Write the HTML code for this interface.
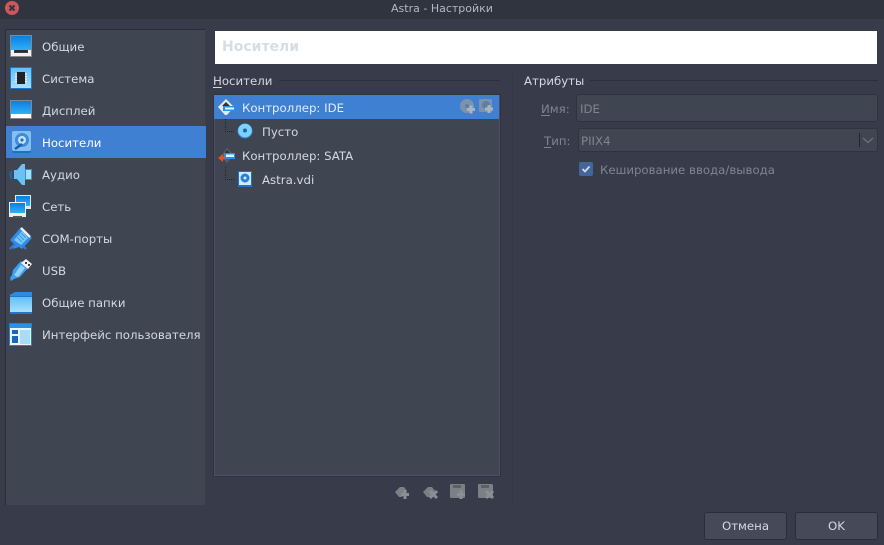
<!DOCTYPE html>
<html>
<head>
<meta charset="utf-8">
<style>
html,body{margin:0;padding:0}
body{width:884px;height:545px;position:relative;overflow:hidden;background:#383c4a;font-family:"DejaVu Sans","Liberation Sans",sans-serif;font-size:11.75px;color:#d3dae3}
.a{position:absolute}
.t{position:absolute;white-space:nowrap;line-height:16px}
svg{position:absolute;overflow:visible}
u{text-decoration-thickness:1px;text-underline-offset:2px}
</style>
</head>
<body>
<svg width="0" height="0" style="left:0;top:0"><defs>
<linearGradient id="sc" x1="0" y1="0" x2="0" y2="1"><stop offset="0" stop-color="#0a7fe0"/><stop offset="1" stop-color="#2fb0fa"/></linearGradient>
<linearGradient id="lb" x1="0" y1="0" x2="0" y2="1"><stop offset="0" stop-color="#5fc0f8"/><stop offset="1" stop-color="#a8e0fc"/></linearGradient>
</defs></svg>
<div class="a" style="left:0;top:0;width:884px;height:19px;background:#2f343f"></div>
<div class="t" style="left:0;width:884px;top:1px;text-align:center;color:#afb8c6;font-size:11px">Astra - Настройки</div>
<svg style="left:5px;top:1px" width="14" height="14"><circle cx="7" cy="7" r="7" fill="#cc575d"/><path d="M4.500 4.500l5 5M9.500 4.500l-5 5" stroke="#2f343f" stroke-width="2"/></svg>

<!-- sidebar -->
<div class="a" style="left:5px;top:29px;width:201px;height:476px;background:#404552;border-left:1px solid #2b2e39;border-top:1px solid #2b2e39;border-right:1px solid #3a3f4c;box-sizing:border-box"></div>
<div class="a" style="left:6px;top:126px;width:200px;height:32px;background:#3f80d2"></div>
<div class="t" style="left:42px;top:39px">Общие</div>
<div class="t" style="left:42px;top:71px">Система</div>
<div class="t" style="left:42px;top:103px">Дисплей</div>
<div class="t" style="left:42px;top:135px;color:#fff">Носители</div>
<div class="t" style="left:42px;top:167px">Аудио</div>
<div class="t" style="left:42px;top:199px">Сеть</div>
<div class="t" style="left:42px;top:231px">COM-порты</div>
<div class="t" style="left:42px;top:263px">USB</div>
<div class="t" style="left:42px;top:295px">Общие папки</div>
<div class="t" style="left:42px;top:327px">Интерфейс пользователя</div>

<!-- sidebar icons -->
<svg style="left:10px;top:35px" width="22" height="22"><rect width="22" height="22" fill="#85888e"/><rect x="1" y="1" width="20" height="14" fill="url(#sc)"/><rect x="1" y="15" width="20" height="6" fill="#f2f2f2"/><rect x="4" y="15" width="14" height="3" fill="#3a3d44"/><rect x="5" y="15" width="12" height="2" fill="#2a2d33"/></svg>
<svg style="left:10px;top:67px" width="22" height="22"><rect width="22" height="22" fill="#1a78d4"/><rect x="1" y="1" width="20" height="20" fill="url(#lb)"/><rect x="7" y="5" width="8" height="12" fill="#222"/><path d="M5 7h2M5 9.500h2M5 12h2M5 14.500h2M15 7h2M15 9.500h2M15 12h2M15 14.500h2" stroke="#eef" stroke-width="1.200"/></svg>
<svg style="left:10px;top:100px" width="22" height="20"><rect width="22" height="19" fill="#85888e"/><rect x="1" y="1" width="20" height="13" fill="url(#sc)"/><rect x="1" y="14" width="20" height="4" fill="#fff"/></svg>
<svg style="left:11px;top:131px" width="21" height="23"><rect x="1" y="1" width="19" height="21" rx="2" fill="#1f6fc4"/><rect x="1" y="0" width="19" height="20" rx="2" fill="#83c0f0"/><circle cx="11" cy="9" r="7" fill="#3f8bdc"/><circle cx="11" cy="9" r="4" fill="#c6e4f8"/><circle cx="11" cy="9" r="1.600" fill="#2a6db8"/><path d="M4 18l7-5" stroke="#1a5da8" stroke-width="2.500"/></svg>
<svg style="left:9px;top:163px" width="24" height="23"><path d="M5 7h3l5-6h3v21h-3l-5-6H5z" fill="#6cc0f5"/><rect x="16" y="6" width="7" height="11" fill="#2a8fe6"/><rect x="17" y="7" width="5" height="9" fill="#a9def9"/><path d="M3 8q-3 3.500 0 8" stroke="#1a66b8" stroke-width="2" fill="none"/></svg>
<svg style="left:9px;top:195px" width="23" height="23"><rect x="6" y="0" width="16" height="14" fill="#e8e8e8"/><rect x="7" y="1" width="14" height="10" fill="url(#sc)"/><rect x="0" y="7" width="17" height="15" fill="#eee"/><rect x="1" y="8" width="15" height="10" fill="url(#sc)"/><rect x="4" y="21" width="9" height="2" fill="#555"/></svg>
<svg style="left:9px;top:226px" width="24" height="24"><path d="M1 14L12 1l11 11-10 11-3-2-6 2 1-5z" fill="#2f8ce8"/><path d="M5 14l8-9 6 7-7 7z" fill="#7cc6f8"/><path d="M8 11l5 5M10 9l5 5M12 7l5 5" stroke="#3a9aea" stroke-width="1"/><path d="M12 2l9 9" stroke="#f0f0f0" stroke-width="2.500"/><path d="M1 23l5-5M17 23l-3-3" stroke="#2a7fd6" stroke-width="2"/></svg>
<svg style="left:9px;top:258px" width="24" height="24"><path d="M2 23l3-2 6-2 8-9-7-7-8 9-1 5-2 3z" fill="#3f9ff0"/><path d="M5 17L12 7l4 3-7 9z" fill="#8fd2fb"/><path d="M12 5l5-4 6 5-4 5z" fill="#f2f2f2"/><rect x="16" y="4" width="2" height="2" fill="#444"/><rect x="19" y="6" width="2" height="2" fill="#444"/></svg>
<svg style="left:9px;top:290px" width="24" height="24"><path d="M1 4h22v20H1z" fill="#1f78cf"/><path d="M1 5l5-3h17v4H1z" fill="#2f8ae0"/><rect x="1" y="7" width="22" height="15" fill="url(#lb)"/></svg>
<svg style="left:9px;top:323px" width="23" height="23"><rect width="23" height="23" fill="#1a82dc"/><rect x="1" y="1" width="21" height="21" fill="#eaf6fd"/><rect x="1" y="1" width="21" height="4" fill="#2a92e4"/><rect x="3" y="7" width="6" height="13" fill="#1968ba"/><rect x="3" y="11" width="6" height="2" fill="#eaf6fd"/><rect x="11" y="7" width="10" height="14" fill="#a8dcf8"/></svg>

<!-- header -->
<div class="a" style="left:215px;top:31px;width:662px;height:33px;background:#fff"></div>
<div class="t" style="left:222px;top:39px;font-size:14px;font-weight:bold;color:#d7dde5">Носители</div>

<!-- storage group -->
<div class="t" style="left:213px;top:73px"><u>Н</u>осители</div>
<div class="a" style="left:279px;top:80px;width:221px;height:1px;background:#2c303b"></div>
<div class="a" style="left:214px;top:95px;width:286px;height:381px;background:#404552;outline:1px solid #2f3340;box-shadow:0 0 0 1px #4a4f6a inset"></div>
<div class="a" style="left:214px;top:95px;width:285px;height:24px;background:#3f80d2"></div>
<div class="t" style="left:242px;top:100px;color:#fff;opacity:.85">Контроллер: IDE</div>
<div class="t" style="left:262px;top:124px">Пусто</div>
<div class="t" style="left:242px;top:148px">Контроллер: SATA</div>
<div class="t" style="left:262px;top:172px">Astra.vdi</div>
<!-- tree lines -->
<svg style="left:220px;top:119px" width="20" height="70"><path d="M5.500 0v12.500H15M5.500 48v12.500H15" stroke="#22252e" stroke-dasharray="1 1" fill="none"/></svg>
<!-- tree icons -->
<svg style="left:218px;top:99px" width="18" height="17"><path d="M0 8L8 0l8 8-7 8H7z" fill="#e8e8e8"/><path d="M4 7l4-4 4 4z" fill="#333"/><rect x="5" y="7" width="12" height="5" fill="#2a8fe6"/><rect x="7" y="8.500" width="9" height="2" fill="#dff"/></svg>
<svg style="left:237px;top:123px" width="16" height="16"><circle cx="8" cy="8" r="7.500" fill="#2f8fe6"/><circle cx="8" cy="7.500" r="6.800" fill="#7fd0fb"/><circle cx="8" cy="7.500" r="2" fill="#1766b8"/></svg>
<svg style="left:218px;top:147px" width="18" height="17"><path d="M3 9l6-8 7 7-7 8z" fill="#5a5d64"/><path d="M6 7l3-4 4 4z" fill="#333"/><rect x="6" y="6" width="11" height="6" fill="#2a8fe6"/><rect x="8" y="7.500" width="8" height="2.500" fill="#dff"/><path d="M0 11l5-4v8z" fill="#e8501e"/><rect x="3" y="9.500" width="4" height="3" fill="#e8501e"/></svg>
<svg style="left:238px;top:171px" width="14" height="16"><rect width="14" height="16" fill="#1a72cc"/><rect x="1" y="1" width="12" height="13" fill="#cfeafc"/><circle cx="7" cy="7" r="4.500" fill="#2a7fd6"/><circle cx="7" cy="7" r="1.500" fill="#cfeafc"/></svg>
<svg style="left:460px;top:99px" width="16" height="16"><circle cx="7" cy="7" r="7" fill="#7c93ad"/><circle cx="7" cy="7" r="2" fill="#5c7fa5"/><path d="M11 6.500v8M7 10.500h8" stroke="#a9b4c1" stroke-width="3"/></svg>
<svg style="left:479px;top:98px" width="16" height="17"><rect x="0" y="1" width="13" height="13" rx="1" fill="#7c93ad"/><circle cx="7" cy="7" r="4" fill="#5c7fa5"/><path d="M10 7v8M6 11h8" stroke="#a9b4c1" stroke-width="3"/></svg>
<!-- bottom tool icons -->
<svg style="left:394px;top:485px" width="17" height="15"><path d="M1 7l5-5h4l3 4-5 6H5z" fill="#7c7f86"/><path d="M11 5v9M7 9.500h8" stroke="#8b8e94" stroke-width="3"/></svg>
<svg style="left:422px;top:485px" width="17" height="15"><path d="M1 7l5-5h4l3 4-5 6H5z" fill="#7c7f86"/><path d="M8 6l7 7M15 6l-7 7" stroke="#8b8e94" stroke-width="3"/></svg>
<svg style="left:450px;top:484px" width="17" height="16"><rect x="0" y="0" width="15" height="14" rx="1" fill="#7c7f86"/><rect x="3" y="1" width="8" height="3" fill="#5c5f66"/><path d="M11 6v9M7 10.500h8" stroke="#8b8e94" stroke-width="3"/></svg>
<svg style="left:478px;top:484px" width="17" height="16"><rect x="0" y="0" width="15" height="14" rx="1" fill="#7c7f86"/><rect x="3" y="1" width="8" height="3" fill="#5c5f66"/><path d="M8 7l7 7M15 7l-7 7" stroke="#8b8e94" stroke-width="3"/></svg>

<!-- splitter -->
<div class="a" style="left:512px;top:70px;width:1px;height:435px;background:#353945"></div>

<!-- attributes -->
<div class="t" style="left:524px;top:73px">Атрибуты</div>
<div class="a" style="left:590px;top:80px;width:288px;height:1px;background:#2c303b"></div>
<div class="t" style="left:541px;top:101px;color:#7f8590"><u>И</u>мя:</div>
<div class="a" style="left:576px;top:94px;width:302px;height:28px;box-sizing:border-box;background:#404552;border:1px solid #2f3340;border-radius:3px"></div>
<div class="t" style="left:580px;top:101px;color:#7f8590">IDE</div>
<div class="t" style="left:544px;top:133px;color:#7f8590"><u>Т</u>ип:</div>
<div class="a" style="left:578px;top:128px;width:300px;height:24px;box-sizing:border-box;background:#404552;border:1px solid #2f3340;border-radius:3px"></div>
<div class="t" style="left:581px;top:133px;color:#7f8590">PIIX4</div>
<div class="a" style="left:859px;top:133px;width:1px;height:14px;background:#23262e"></div>
<svg style="left:862px;top:137px" width="12" height="7"><path d="M1 1l5 4.500L11 1" stroke="#6b7079" stroke-width="1.300" fill="none"/></svg>
<div class="a" style="left:579px;top:162px;width:14px;height:14px;background:#42659b;border-radius:2px"></div>
<svg style="left:579px;top:162px" width="14" height="14"><path d="M3.500 7l2.500 2.500 4.500-5" stroke="#d6dbe3" stroke-width="1.800" fill="none"/></svg>
<div class="t" style="left:600px;top:162px;color:#7f8590">Кеширование ввода/вывода</div>

<!-- buttons -->
<div class="a" style="left:704px;top:512px;width:83px;height:28px;box-sizing:border-box;background:#444a58;border:1px solid #2b2e39;border-radius:3px;text-align:center;line-height:27px">Отмена</div>
<div class="a" style="left:795px;top:512px;width:83px;height:28px;box-sizing:border-box;background:#444a58;border:1px solid #2b2e39;border-radius:3px;text-align:center;line-height:27px">OK</div>
</body>
</html>
